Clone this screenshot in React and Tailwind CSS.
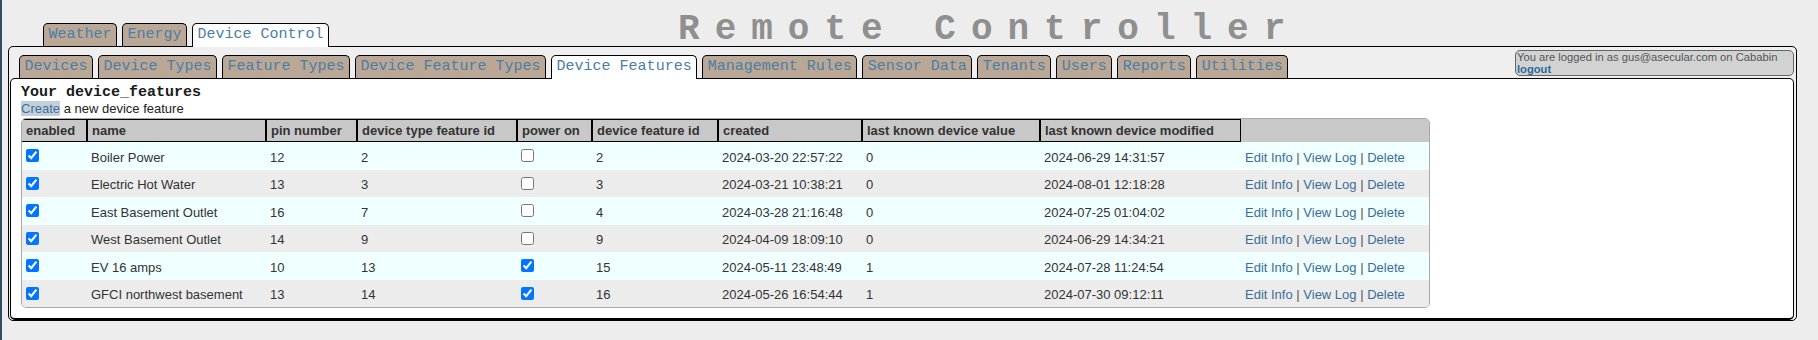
const mono = "font-['Liberation_Mono','Courier_New',monospace]"
const sans = "font-['Liberation_Sans',Arial,sans-serif]"

const topTabs = [
  { label: 'Weather' },
  { label: 'Energy' },
  { label: 'Device Control', active: true },
]

const subTabs = [
  'Devices',
  'Device Types',
  'Feature Types',
  'Device Feature Types',
  'Device Features',
  'Management Rules',
  'Sensor Data',
  'Tenants',
  'Users',
  'Reports',
  'Utilities',
]

const columns = [
  { label: 'enabled', width: 65 },
  { label: 'name', width: 179 },
  { label: 'pin number', width: 91 },
  { label: 'device type feature id', width: 160 },
  { label: 'power on', width: 75 },
  { label: 'device feature id', width: 126 },
  { label: 'created', width: 144 },
  { label: 'last known device value', width: 178 },
  { label: 'last known device modified', width: 201 },
  { label: '', width: 188 },
]

const rows = [
  ['Boiler Power', 12, 2, false, 2, '2024-03-20 22:57:22', 0, '2024-06-29 14:31:57'],
  ['Electric Hot Water', 13, 3, false, 3, '2024-03-21 10:38:21', 0, '2024-08-01 12:18:28'],
  ['East Basement Outlet', 16, 7, false, 4, '2024-03-28 21:16:48', 0, '2024-07-25 01:04:02'],
  ['West Basement Outlet', 14, 9, false, 9, '2024-04-09 18:09:10', 0, '2024-06-29 14:34:21'],
  ['EV 16 amps', 10, 13, true, 15, '2024-05-11 23:48:49', 1, '2024-07-28 11:24:54'],
  ['GFCI northwest basement', 13, 14, true, 16, '2024-05-26 16:54:44', 1, '2024-07-30 09:12:11'],
]

function Tab({ label, active }) {
  if (active) {
    return (
      <div className={`relative z-10 -mb-px h-[24px] whitespace-nowrap rounded-t-[5px] border border-b-0 border-black bg-white px-[4.5px] text-[15px] leading-[22px] text-[#4a7ea6] ${mono}`}>
        {label}
      </div>
    )
  }
  return (
    <div className={`h-[23px] whitespace-nowrap rounded-t-[5px] border border-b-0 border-black bg-[#baa795] px-[4.5px] text-[15px] leading-[22px] text-[#4a7ea6] ${mono}`}>
      {label}
    </div>
  )
}

function Actions() {
  return (
    <span className="text-[#555]">
      <a className="text-[#3b6d98]">Edit Info</a> | <a className="text-[#3b6d98]">View Log</a> |{' '}
      <a className="text-[#3b6d98]">Delete</a>
    </span>
  )
}

export default function App() {
  return (
    <div className={`h-[340px] w-full border-l-2 border-[#2f4d5f] bg-[#ededed] ${sans}`}>
      {/* top tabs + title */}
      <div className="flex h-[46px] items-end pl-[41px]">
        <div className="flex items-end gap-[5px]">
          {topTabs.map((t) => (
            <Tab key={t.label} label={t.label} active={t.active} />
          ))}
        </div>
        <div className={`-mb-[2px] ml-[349px] whitespace-nowrap text-[36px] font-bold leading-[36px] tracking-[15px] text-[#8f8f8f] ${mono}`}>
          Remote Controller
        </div>
      </div>

      {/* outer panel */}
      <div className="ml-[6px] w-[1789px] rounded-[5px] border border-black bg-[#efefef] pl-[1px] pr-[2px]">
        <div className="flex h-[31px] items-end pt-[3px]">
          <div className="ml-[9px] flex items-end gap-[5px]">
            {subTabs.map((t) => (
              <Tab key={t} label={t} active={t === 'Device Features'} />
            ))}
          </div>
          <div className="ml-auto h-[26px] w-[279px] self-start rounded-[5px] border border-[#666] bg-[#d2d2d2] pl-[1px] text-[11.2px] leading-[12px] text-[#555]">
            <div>You are logged in as gus@asecular.com on Cababin</div>
            <a className="font-bold text-[#2d6a99]">logout</a>
          </div>
        </div>

        {/* inner panel */}
        <div className="rounded-[5px] border border-b-2 border-black bg-white pb-[10px] pl-[10px] pt-[5px]">
          <div className={`text-[15px] font-bold leading-[17px] text-[#1a1a1a] ${mono}`}>Your device_features</div>
          <div className="text-[13px] leading-[15px] text-[#222]">
            <a className="bg-[#c3cfdb] text-[#3d6f9c]">Create</a> a new device feature
          </div>

          <div className="mt-[2px] w-[1409px] overflow-hidden rounded-[5px] border border-[#a8a8a8]">
            <table className="w-full table-fixed border-separate border-spacing-0 text-[13px] text-[#333]">
              <colgroup>
                {columns.map((c, i) => (
                  <col key={i} style={{ width: c.width }} />
                ))}
              </colgroup>
              <thead>
                <tr className="bg-[#c8c8c8]">
                  {columns.map((c, i) => {
                    if (i === columns.length - 1) return <th key={i} className="h-[23px]" />
                    return (
                      <th
                        key={i}
                        className={`h-[23px] whitespace-nowrap border border-black pl-[4px] text-left font-bold ${i === 0 ? 'border-l-0' : ''}`}
                      >
                        {c.label}
                      </th>
                    )
                  })}
                </tr>
              </thead>
              <tbody>
                {rows.map((r, i) => (
                  <tr key={r[0]} className={i % 2 === 0 ? 'bg-[#f0ffff]' : 'bg-[#ececec]'}>
                    <td className="h-[27.5px] pl-[4px] align-middle">
                      <input type="checkbox" checked readOnly className="block" />
                    </td>
                    <td className="whitespace-nowrap pl-[4px] pt-[3px]">{r[0]}</td>
                    <td className="pl-[4px] pt-[3px]">{r[1]}</td>
                    <td className="pl-[4px] pt-[3px]">{r[2]}</td>
                    <td className="pl-[4px] align-middle">
                      <input type="checkbox" checked={r[3]} readOnly className="block" />
                    </td>
                    <td className="pl-[4px] pt-[3px]">{r[4]}</td>
                    <td className="whitespace-nowrap pl-[4px] pt-[3px]">{r[5]}</td>
                    <td className="pl-[4px] pt-[3px]">{r[6]}</td>
                    <td className="whitespace-nowrap pl-[4px] pt-[3px]">{r[7]}</td>
                    <td className="whitespace-nowrap pl-[4px] pt-[3px]">
                      <Actions />
                    </td>
                  </tr>
                ))}
              </tbody>
            </table>
          </div>
        </div>
      </div>
    </div>
  )
}
